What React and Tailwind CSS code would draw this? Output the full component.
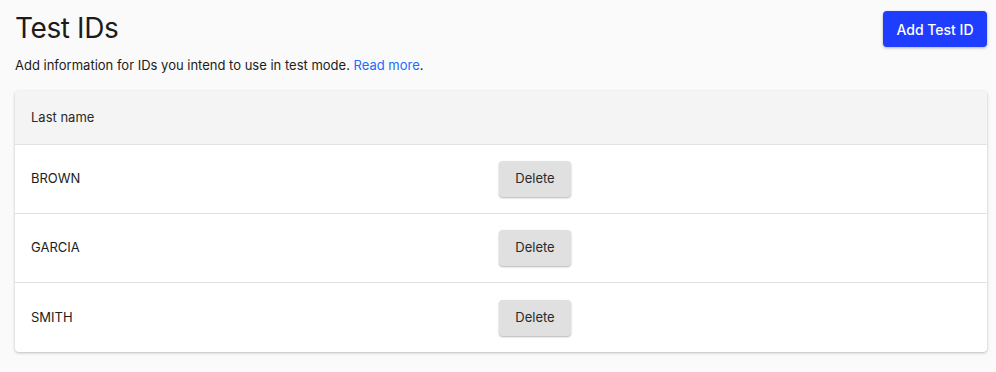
export default function App() {
  const rows = ["BROWN", "GARCIA", "SMITH"];
  return (
    <div className="min-h-[372px] w-[996px] bg-[#fafafa] pl-[15px] pr-[9px] pt-[11px] text-[#1a1a1a]" style={{ fontFamily: "Inter, 'Noto Sans', sans-serif" }}>
      <div className="flex items-start justify-between">
        <h1 className="text-[28px] font-normal leading-[34px] tracking-[-0.4px] text-[#1c1c1c]">Test IDs</h1>
        <button className="h-9 w-[104px] rounded-[4px] bg-[#1f3dff] text-[14px] font-medium text-white shadow-[0_1px_3px_rgba(0,0,0,0.3)]">
          Add Test ID
        </button>
      </div>
      <p className="mt-[9px] text-[13px] leading-[18px] text-[#1c1c1c]">
        Add information for IDs you intend to use in test mode. <span className="text-[#1a6dff]">Read more</span>.
      </p>
      <div className="mt-[17px] w-[972px] overflow-hidden rounded-[4px] bg-white shadow-[0_1px_3px_rgba(0,0,0,0.25)]">
        <div className="flex h-[54px] items-center border-b border-[#e2e2e2] bg-[#f4f4f4] pl-4 text-[13px] text-[#2a2a2a]">
          Last name
        </div>
        {rows.map((name, i) => (
          <div key={name} className={`flex h-[69px] items-center ${i < rows.length - 1 ? "border-b border-[#e2e2e2]" : ""}`}>
            <div className="w-[484px] pl-4 text-[13px] text-[#1c1c1c]">{name}</div>
            <button className="h-9 w-[72px] rounded-[4px] bg-[#e0e0e0] text-[13px] text-[#2a2a2a] shadow-[0_1px_2px_rgba(0,0,0,0.3)]">
              Delete
            </button>
          </div>
        ))}
      </div>
    </div>
  );
}
